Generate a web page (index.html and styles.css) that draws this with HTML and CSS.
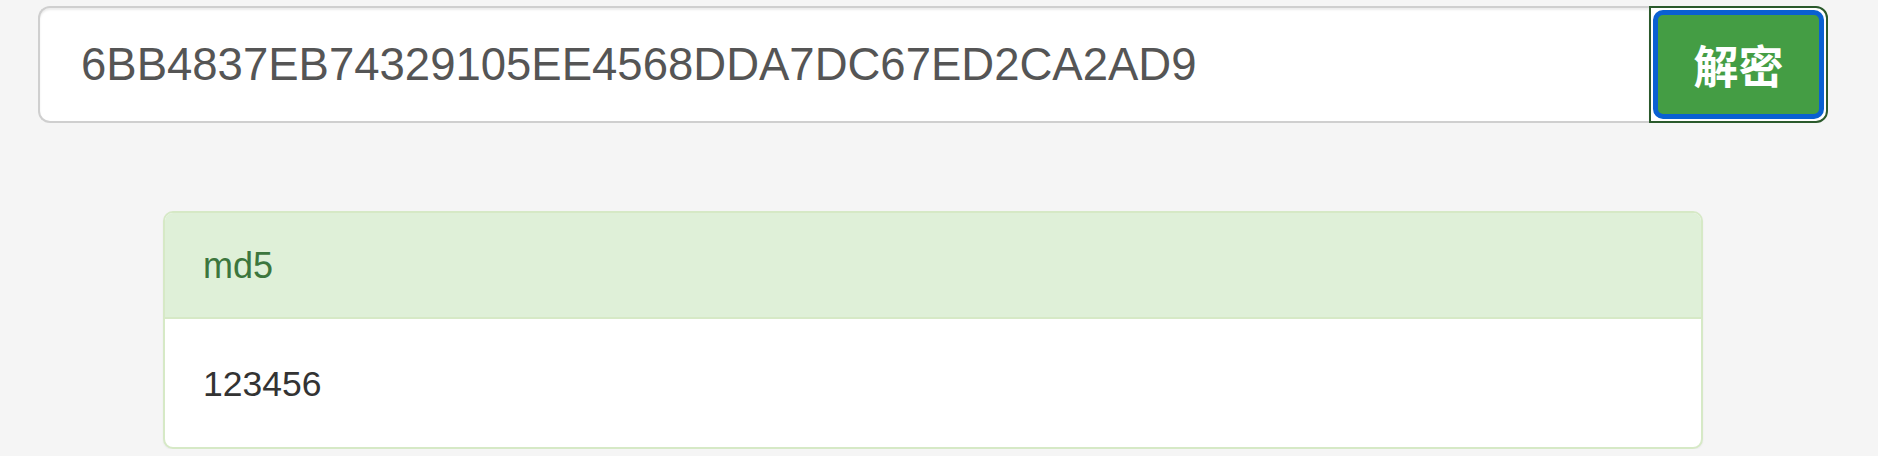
FILE: index.html
```html
<!DOCTYPE html>
<html lang="zh">
<head>
<meta charset="utf-8">
<title>md5 解密</title>
<link rel="stylesheet" href="styles.css">
</head>
<body>
<div class="search">
  <input class="search-input" type="text" value="6BB4837EB74329105EE4568DDA7DC67ED2CA2AD9">
  <button class="search-btn" type="button"><span class="search-btn-inner">解密</span></button>
</div>
<div class="panel">
  <div class="panel-heading">md5</div>
  <div class="panel-body">123456</div>
</div>
</body>
</html>
```
FILE: styles.css
```css
html, body {
  margin: 0;
  padding: 0;
  background: #f5f5f5;
}
body {
  font-family: "Liberation Sans", Arial, sans-serif;
}
.search {
  display: flex;
  height: 117px;
  margin: 6px 50px 0 38px;
}
.search-input {
  flex: 1;
  min-width: 0;
  box-sizing: border-box;
  height: 117px;
  margin: 0;
  padding: 0 20px 0 41px;
  border: 2px solid #cfcfcf;
  border-right: none;
  border-radius: 12px 0 0 12px;
  background: #fff;
  box-shadow: inset 0 2px 2px rgba(0,0,0,0.075);
  font-family: "Liberation Sans", Arial, sans-serif;
  font-size: 45.5px;
  color: #555;
  outline: none;
}
.search-btn {
  box-sizing: border-box;
  width: 179px;
  height: 117px;
  margin: 0;
  padding: 2px;
  border: 2px solid #2b5a2c;
  border-radius: 0 12px 12px 0;
  background: #fff;
  display: flex;
  cursor: pointer;
}
.search-btn-inner {
  flex: 1;
  display: flex;
  align-items: center;
  justify-content: center;
  border: 5px solid #0a60d2;
  border-radius: 10px;
  background: #449d44;
  color: #fff;
  font-family: "Noto Sans CJK SC", "Noto Sans CJK JP", sans-serif;
  font-weight: 700;
  font-size: 45px;
  line-height: 1;
}
.panel {
  margin: 88px 175px 0 163px;
  border: 2px solid #d6e9c6;
  border-radius: 10px;
  background: #fff;
  box-shadow: 0 1px 2px rgba(0,0,0,0.05);
  overflow: hidden;
}
.panel-heading {
  padding: 33px 38px 31px;
  background: #dff0d8;
  border-bottom: 2px solid #d6e9c6;
  color: #3c763d;
  font-size: 36px;
  line-height: 40px;
}
.panel-body {
  padding: 45px 38px 43px;
  color: #333;
  font-size: 35.5px;
  line-height: 40px;
}
```
